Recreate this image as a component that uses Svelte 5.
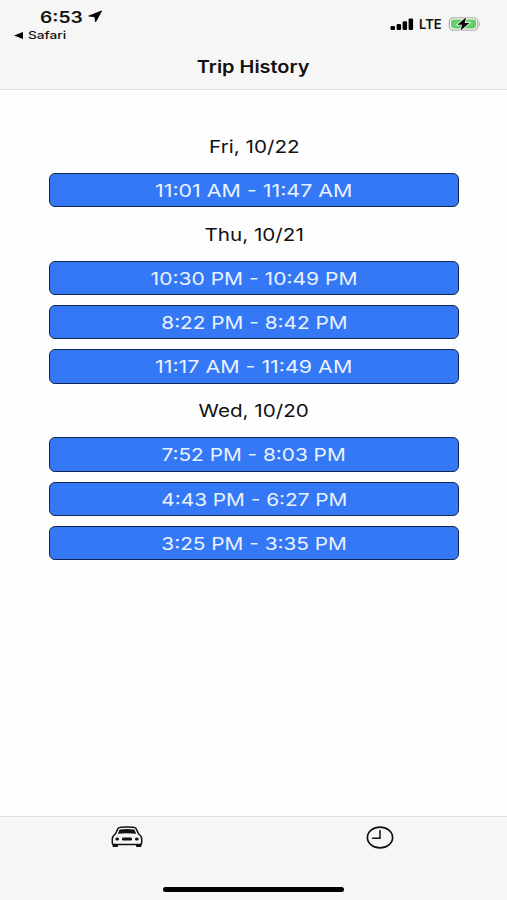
<script lang="ts">
	type Trip = { start: string; end: string };
	type Day = { label: string; trips: Trip[] };

	let days: Day[] = [
		{
			label: 'Fri, 10/22',
			trips: [{ start: '11:01 AM', end: '11:47 AM' }]
		},
		{
			label: 'Thu, 10/21',
			trips: [
				{ start: '10:30 PM', end: '10:49 PM' },
				{ start: '8:22 PM', end: '8:42 PM' },
				{ start: '11:17 AM', end: '11:49 AM' }
			]
		},
		{
			label: 'Wed, 10/20',
			trips: [
				{ start: '7:52 PM', end: '8:03 PM' },
				{ start: '4:43 PM', end: '6:27 PM' },
				{ start: '3:25 PM', end: '3:35 PM' }
			]
		}
	];

	// narrow 1s need a little more stretch
	function stretch(text: string) {
		const ones = text.split('1').length - 1;
		return 1.188 + ones * 0.007;
	}
</script>

<div class="screen">
	<header>
		<div class="status">
			<div class="left">
				<div class="clock">
					<span class="time">6:53</span>
					<svg width="15" height="13" viewBox="0 0 15 13">
						<path d="M13.6 1 L0.8 6 L6.8 6.7 L7.6 11.8 Z" fill="#000" stroke="#000" stroke-width="0.9" stroke-linejoin="round" />
					</svg>
				</div>
				<div class="back">
					<svg width="9" height="7" viewBox="0 0 9 7">
						<path d="M0 3.5 L9 0 V7 Z" fill="#000" />
					</svg>
					<span>Safari</span>
				</div>
			</div>
			<div class="right">
				<svg width="24" height="13" viewBox="0 0 24 13">
					<rect x="0.5" y="8" width="4.5" height="4" rx="1.2" />
					<rect x="6.6" y="6" width="4.5" height="6" rx="1.2" />
					<rect x="12.6" y="3.3" width="4.5" height="8.7" rx="1.2" />
					<rect x="18.6" y="0.5" width="4.5" height="11.5" rx="1.2" />
				</svg>
				<span class="lte">LTE</span>
				<svg class="battery" width="34" height="16" viewBox="0 0 34 16">
					<rect x="1.3" y="1.8" width="28.6" height="12.4" rx="4" fill="#f6f6f6" stroke="#a9a9ab" stroke-width="1.1" />
					<rect x="3.1" y="3.5" width="25" height="9" rx="2.4" fill="#65ce6b" />
					<path d="M31.3 5.7 Q33.5 8 31.3 10.3 Z" fill="#a9a9ab" />
					<path d="M18 1.2 L9.5 8.8 H14 L12.6 14.6 L21.4 7 H16.8 Z" fill="#000" stroke="#f6f6f6" stroke-width="1.6" paint-order="stroke" />
				</svg>
			</div>
		</div>
		<h1><span>Trip History</span></h1>
	</header>

	<main>
		{#each days as day}
			<h2><span>{day.label}</span></h2>
			{#each day.trips as trip}
				<button>
					<span style="transform: scaleX({stretch(trip.start + trip.end)})">{trip.start} - {trip.end}</span>
				</button>
			{/each}
		{/each}
	</main>

	<footer>
		<nav>
			<a href="#current" aria-label="Current trip">
				<svg class="car" width="32" height="22" viewBox="0 0 32 22">
					<path d="M2 16 V20.5 H6.5 V18.5 H25.5 V20.5 H30 V16 Z" fill="#111" stroke="#111" stroke-linejoin="round" />
					<path d="M7.2 2.2 Q8 1.4 10 1.2 Q16 0.7 22 1.2 Q24 1.4 24.8 2.2 L27.7 8 Q30.7 10 30.7 13 V16.8 Q30.7 18.4 28.5 18.4 H3.5 Q1.3 18.4 1.3 16.8 V13 Q1.3 10 4.3 8 Z" fill="#f6f6f6" stroke="#111" stroke-width="1.5" />
					<path d="M8.7 3.6 Q16 2.6 23.3 3.6 L25.3 7.7 Q16 6.8 6.7 7.7 Z" fill="#111" />
					<ellipse cx="6.2" cy="13" rx="1.9" ry="1.6" fill="#111" />
					<ellipse cx="25.8" cy="13" rx="1.9" ry="1.6" fill="#111" />
					<rect x="11" y="11.6" width="10" height="2.9" rx="1.3" fill="#111" />
				</svg>
			</a>
			<a href="#history" aria-label="Trip history">
				<svg width="28" height="24" viewBox="0 0 28 24" fill="none" stroke="#111" stroke-width="1.7">
					<ellipse cx="14" cy="11.5" rx="12.6" ry="10.4" />
					<path d="M14 4.5 V12.2 H6.5" stroke-linecap="round" stroke-width="1.5" />
				</svg>
			</a>
		</nav>
		<div class="home"></div>
	</footer>
</div>

<style>
:global(body) {
	margin: 0;
	background: #fff;
}
.screen {
	width: 507px;
	height: 900px;
	display: flex;
	flex-direction: column;
	overflow: hidden;
	background: #fefefe;
	color: #111;
	font-family: Inter, "Liberation Sans", sans-serif;
}
header {
	height: 90px;
	box-sizing: border-box;
	background: #f6f6f6;
	border-bottom: 1px solid #dedede;
}
.status {
	height: 46px;
	display: flex;
	justify-content: space-between;
}
.left {
	padding: 6px 0 0 14px;
}
.clock {
	display: flex;
	align-items: center;
	height: 21px;
	padding-left: 26px;
}
.time {
	width: 48px;
	font-size: 16px;
	font-weight: 600;
	transform: scaleX(1.2);
	transform-origin: left;
}
.back {
	display: flex;
	align-items: center;
	gap: 5px;
	height: 16px;
	font-size: 11px;
	font-weight: 500;
}
.back span {
	transform: scaleX(1.24);
	transform-origin: left;
}
.right {
	display: flex;
	align-items: center;
	height: 16px;
	padding: 16px 25px 0 0;
}
.lte {
	width: 24px;
	margin: 0 5px;
	font-size: 13px;
	font-weight: 600;
}
h1,
h2 {
	margin: 0;
	text-align: center;
}
h1 {
	font-size: 17px;
	line-height: 43px;
	font-weight: 600;
}
h1 span,
h2 span,
button span {
	display: inline-block;
}
h1 span {
	transform: scaleX(1.17);
}
h2 span {
	transform: scaleX(1.18);
}
main {
	flex: 1;
	display: flex;
	flex-direction: column;
	gap: 9.85px;
	padding: 38.5px 48px 0 49px;
}
h2 {
	height: 34.3px;
	font-size: 17.5px;
	line-height: 35px;
	font-weight: 400;
}
button {
	height: 34.3px;
	padding: 0;
	border: 1.5px solid #14284f;
	border-radius: 6px;
	background: #3478f6;
	color: #eaf2ff;
	font-family: inherit;
	font-size: 17.5px;
	line-height: 33px;
}
footer {
	height: 84px;
	box-sizing: border-box;
	border-top: 1px solid #dedede;
	background: #f6f6f6;
}
nav {
	display: grid;
	grid-template-columns: 1fr 1fr;
	height: 70px;
}
nav a {
	display: flex;
	align-items: center;
	justify-content: center;
	height: 41px;
}
.car {
	margin-bottom: 2px;
}
.home {
	width: 181px;
	height: 5px;
	margin: 0 auto;
	border-radius: 3px;
	background: #000;
}
</style>
